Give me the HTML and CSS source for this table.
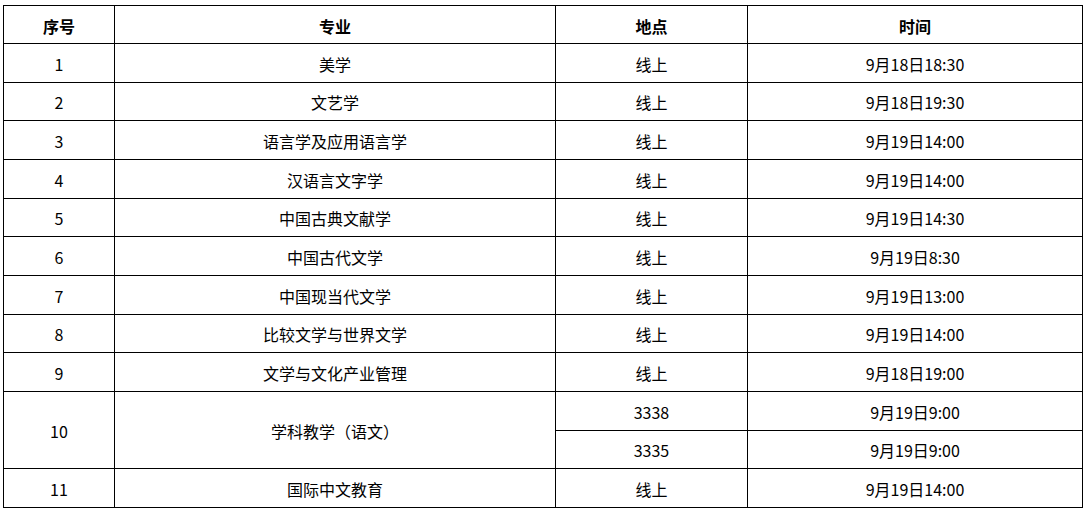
FILE: index.html
```html
<!DOCTYPE html>
<html lang="zh-CN">
<head>
<meta charset="utf-8">
<title>面试安排</title>
<link rel="stylesheet" href="styles.css">
</head>
<body>
<div class="page">
<table class="schedule">
  <colgroup>
    <col class="c-no">
    <col class="c-major">
    <col class="c-place">
    <col class="c-time">
  </colgroup>
  <thead>
    <tr class="head"><th>序号</th><th>专业</th><th>地点</th><th>时间</th></tr>
  </thead>
  <tbody>
    <tr><td>1</td><td>美学</td><td>线上</td><td>9月18日18:30</td></tr>
    <tr><td>2</td><td>文艺学</td><td>线上</td><td>9月18日19:30</td></tr>
    <tr><td>3</td><td>语言学及应用语言学</td><td>线上</td><td>9月19日14:00</td></tr>
    <tr><td>4</td><td>汉语言文字学</td><td>线上</td><td>9月19日14:00</td></tr>
    <tr><td>5</td><td>中国古典文献学</td><td>线上</td><td>9月19日14:30</td></tr>
    <tr><td>6</td><td>中国古代文学</td><td>线上</td><td>9月19日8:30</td></tr>
    <tr><td>7</td><td>中国现当代文学</td><td>线上</td><td>9月19日13:00</td></tr>
    <tr><td>8</td><td>比较文学与世界文学</td><td>线上</td><td>9月19日14:00</td></tr>
    <tr><td>9</td><td>文学与文化产业管理</td><td>线上</td><td>9月18日19:00</td></tr>
    <tr><td rowspan="2">10</td><td rowspan="2">学科教学（语文）</td><td>3338</td><td>9月19日9:00</td></tr>
    <tr><td>3335</td><td>9月19日9:00</td></tr>
    <tr><td>11</td><td>国际中文教育</td><td>线上</td><td>9月19日14:00</td></tr>
  </tbody>
</table>
</div>
</body>
</html>
```
FILE: styles.css
```css
html, body {
  margin: 0;
  padding: 0;
  background: #ffffff;
}

.page {
  padding: 5px 0 0 3px;
}

.schedule {
  border-collapse: collapse;
  table-layout: fixed;
  width: 1079px;
  font-family: "Noto Sans CJK SC", "Noto Sans", sans-serif;
  font-size: 16px;
  color: #000000;
}

.c-no { width: 111px; }
.c-major { width: 441px; }
.c-place { width: 192px; }
.c-time { width: 335px; }

.schedule th,
.schedule td {
  border: 1px solid #000000;
  padding: 2px 0 0 0;
  text-align: center;
  vertical-align: middle;
  line-height: 20px;
}

.schedule th {
  font-weight: 700;
}

.schedule tr.head {
  height: 38px;
}

.schedule tbody tr {
  height: 38.67px;
}
```
